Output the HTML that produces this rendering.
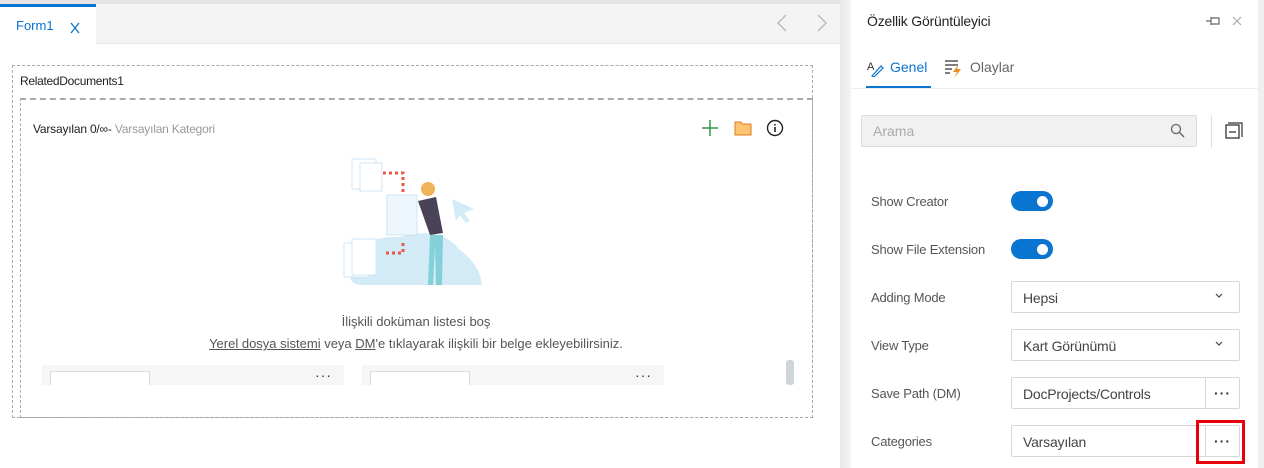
<!DOCTYPE html>
<html><head><meta charset="utf-8"><style>
*{box-sizing:border-box;margin:0;padding:0}
body{width:1264px;height:468px;overflow:hidden;background:#fff;font-family:"Liberation Sans","DejaVu Sans",sans-serif;position:relative;color:#333}
.abs{position:absolute}
.lbl{position:absolute;left:871px;font-size:13px;color:#555;letter-spacing:-0.2px}
.tog{position:absolute;left:1011px;width:42px;height:20px;border-radius:10px;background:#0a74d1}
.tog::after{content:"";position:absolute;right:5px;top:5px;width:11px;height:11px;border-radius:50%;background:#fff}
.inp{position:absolute;left:1011px;width:229px;height:32px;border:1px solid #d6d6d6;border-radius:2px;font-size:14px;color:#444;padding:8px 11px;letter-spacing:-0.2px}
.chev{position:absolute;right:16px;top:11px}
.dots{position:absolute;right:0;top:0;width:34px;height:30px;border-left:1px solid #d6d6d6;text-align:center;font-size:14px;letter-spacing:1px;line-height:30px;color:#333;font-weight:bold}
</style></head><body>
<div class="abs" style="left:0;top:0;width:840px;height:4px;background:#e4e4e4"></div>
<div class="abs" style="left:0;top:4px;width:840px;height:40px;background:#f3f3f3;border-bottom:1px solid #e6e6e6"></div>
<div class="abs" style="left:0;top:4px;width:96px;height:41px;background:#fff;border-top:3px solid #0a74d1"></div>
<div class="abs" style="left:16px;top:18px;font-size:13px;color:#0a74d1">Form1</div>
<svg class="abs" style="left:70px;top:22px" width="10" height="12"><path d="M1 1 L9 11 M9 1 L1 11" stroke="#0a74d1" stroke-width="1.3"/></svg>
<svg class="abs" style="left:776px;top:14px" width="12" height="18"><path d="M10 1 L2 9 L10 17" stroke="#bbb" fill="none" stroke-width="1.5"/></svg>
<svg class="abs" style="left:816px;top:14px" width="12" height="18"><path d="M2 1 L10 9 L2 17" stroke="#bbb" fill="none" stroke-width="1.5"/></svg>
<div class="abs" style="left:12px;top:65px;width:801px;height:353px;border:1px dashed #aaa"></div>
<div class="abs" style="left:20px;top:74px;font-size:12px;color:#222;letter-spacing:-0.3px">RelatedDocuments1</div>
<div class="abs" style="left:20px;top:98px;width:793px;height:320px;border:1px dashed #aaa;border-top:2px dashed #aaa"></div>
<div class="abs" style="left:33px;top:122px;font-size:12px;color:#222;letter-spacing:-0.2px">Varsayılan 0/∞- <span style="color:#999">Varsayılan Kategori</span></div>
<svg class="abs" style="left:702px;top:120px" width="16" height="16"><path d="M8 0V16M0 8H16" stroke="#2a9a3f" stroke-width="1.5"/></svg>
<svg class="abs" style="left:734px;top:120px" width="18" height="16"><path d="M1 2H7L8 4H17V15H1Z" fill="#fbc572" stroke="#e07b1c"/></svg>
<svg class="abs" style="left:766px;top:119px" width="18" height="18"><circle cx="9" cy="9" r="7.5" stroke="#222" stroke-width="1.4" fill="none"/><path d="M9 8V13M9 5V6.5" stroke="#222" stroke-width="1.6"/></svg>
<svg class="abs" style="left:340px;top:155px" width="150" height="135">
<path d="M12 110 Q20 80 60 82 Q100 70 120 95 Q140 110 142 130 L20 130 Q5 128 12 110Z" fill="#d2ebf7"/>
<rect x="12" y="4" width="24" height="30" fill="#fff" stroke="#cfe4f4"/><rect x="20" y="8" width="22" height="28" fill="#fff" stroke="#cfe4f4"/>
<rect x="4" y="88" width="24" height="34" fill="#fff" stroke="#cfe4f4"/><rect x="12" y="84" width="24" height="36" fill="#fff" stroke="#cfe4f4"/>
<path d="M43 18 H63 V60 M63 88 V98 H45" stroke="#e8594a" stroke-width="3" stroke-dasharray="3 3" fill="none"/>
<rect x="47" y="40" width="30" height="40" fill="#eef7fd" stroke="#cfe4f4"/>
<circle cx="88" cy="34" r="7" fill="#f1b359"/>
<path d="M78 46 L96 42 L103 78 L90 80Z" fill="#4a4257"/>
<path d="M90 80 H103 L102 130 H96 L95 90 L93 130 H88Z" fill="#84d0d8"/>
<path d="M112 44 L134 54 L124 58 L130 66 L126 68 L120 60 L116 66Z" fill="#d2ebf7"/>
</svg>
<div class="abs" style="left:0;width:832px;top:314px;text-align:center;font-size:13px;color:#555">İlişkili doküman listesi boş</div>
<div class="abs" style="left:0;width:832px;top:336px;text-align:center;font-size:13px;color:#555"><u>Yerel dosya sistemi</u> veya <u>DM</u>'e tıklayarak ilişkili bir belge ekleyebilirsiniz.</div>
<div class="abs" style="left:42px;top:365px;width:302px;height:20px;background:#f6f6f6"><div style="position:absolute;left:8px;top:6px;width:100px;height:14px;border:1px solid #ddd;border-bottom:none;background:#fff"></div><div style="position:absolute;right:12px;top:2px;font-size:14px;letter-spacing:1px">···</div></div>
<div class="abs" style="left:362px;top:365px;width:302px;height:20px;background:#f6f6f6"><div style="position:absolute;left:8px;top:6px;width:100px;height:14px;border:1px solid #ddd;border-bottom:none;background:#fff"></div><div style="position:absolute;right:12px;top:2px;font-size:14px;letter-spacing:1px">···</div></div>
<div class="abs" style="left:786px;top:360px;width:8px;height:25px;background:#cfd6da;border-radius:3px"></div>
<div class="abs" style="left:840px;top:0;width:11px;height:468px;background:linear-gradient(90deg,#e8e8e8,#f4f4f4)"></div>
<div class="abs" style="left:1258px;top:0;width:6px;height:468px;background:#f0f0f0"></div>
<div class="abs" style="left:867px;top:13px;font-size:14px;color:#222;letter-spacing:-0.2px">Özellik Görüntüleyici</div>
<svg class="abs" style="left:1205px;top:15px" width="16" height="12"><path d="M1 6H6M6 2V10M6 3H14V9H6" stroke="#666" fill="none" stroke-width="1.2"/></svg>
<svg class="abs" style="left:1232px;top:16px" width="10" height="10"><path d="M1 1L9 9M9 1L1 9" stroke="#aaa" stroke-width="1.2"/></svg>
<svg class="abs" style="left:867px;top:59px" width="18" height="18"><text x="0" y="11" font-size="11" fill="#333" font-family="Liberation Sans">A</text><path d="M5 17 L14 7 L16 9 L7 18Z" fill="none" stroke="#0a74d1" stroke-width="1.2"/></svg>
<div class="abs" style="left:890px;top:59px;font-size:14px;color:#0a74d1">Genel</div>
<svg class="abs" style="left:944px;top:58px" width="20" height="20"><path d="M1 3H14M1 7H14M1 11H8M1 15H6" stroke="#333" stroke-width="1.2"/><path d="M14 7 L9 14 H13 L10 20 L17 11 H13Z" fill="#f08c1c"/></svg>
<div class="abs" style="left:970px;top:59px;font-size:14px;color:#666">Olaylar</div>
<div class="abs" style="left:866px;top:86px;width:65px;height:3px;background:#0a74d1"></div>
<div class="abs" style="left:851px;top:88px;width:407px;height:1px;background:#eee"></div>
<div class="abs" style="left:861px;top:115px;width:336px;height:32px;background:#f2f1f1;border:1px solid #ddd;border-radius:2px;font-size:14px;color:#aaa;padding:7px 11px">Arama</div>
<svg class="abs" style="left:1170px;top:123px" width="16" height="16"><circle cx="6" cy="6" r="4.5" stroke="#666" fill="none" stroke-width="1.3"/><path d="M9.5 9.5L14 14" stroke="#666" stroke-width="1.4"/></svg>
<div class="abs" style="left:1211px;top:115px;width:1px;height:33px;background:#e0e0e0"></div>
<svg class="abs" style="left:1225px;top:122px" width="18" height="18"><path d="M3 1H17V15" stroke="#333" fill="none" stroke-width="1.2"/><rect x="1" y="3" width="13" height="13" fill="none" stroke="#333" stroke-width="1.3"/><path d="M4 10H11" stroke="#333" stroke-width="1.3"/></svg>
<div class="lbl" style="top:194px">Show Creator</div><div class="tog" style="top:191px"></div>
<div class="lbl" style="top:242px">Show File Extension</div><div class="tog" style="top:239px"></div>
<div class="lbl" style="top:290px">Adding Mode</div><div class="inp" style="top:281px">Hepsi<svg class="chev" width="8" height="6"><path d="M1 1L4 4L7 1" stroke="#444" fill="none" stroke-width="1.2"/></svg></div>
<div class="lbl" style="top:338px">View Type</div><div class="inp" style="top:329px">Kart Görünümü<svg class="chev" width="8" height="6"><path d="M1 1L4 4L7 1" stroke="#444" fill="none" stroke-width="1.2"/></svg></div>
<div class="lbl" style="top:386px">Save Path (DM)</div><div class="inp" style="top:377px">DocProjects/Controls<div class="dots">···</div></div>
<div class="lbl" style="top:434px">Categories</div><div class="inp" style="top:425px">Varsayılan<div class="dots">···</div></div>
<div class="abs" style="left:1196px;top:420px;width:49px;height:44px;border:3px solid #e8000b"></div>
</body></html>
